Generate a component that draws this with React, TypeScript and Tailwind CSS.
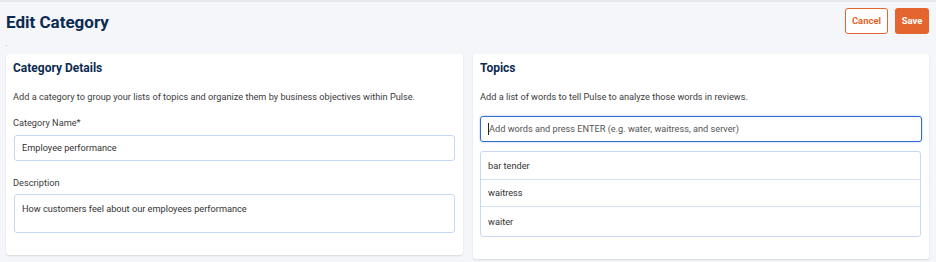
import React from "react";

export default function App() {
  const font = { fontFamily: "Roboto, 'Liberation Sans', sans-serif" };
  return (
    <div
      className="w-[936px] h-[262px] bg-[#f4f6f9] overflow-hidden relative border-t-2 border-[#e6e8ec]"
      style={font}
    >
      <div className="flex items-start justify-between pl-[6px] pr-[7px] pt-[6px] h-[52px]">
        <div className="flex flex-col">
          <h1 className="text-[17px] leading-[24px] font-bold text-[#0c2b50] mt-[2px]">Edit Category</h1>
          <div className="w-[1px] h-[1px] bg-[#a9c3ee] mt-[11px]" />
        </div>
        <div className="flex gap-[7px]">
          <button className="h-[26px] w-[43px] rounded-[3px] border border-[#e4652e] bg-white text-[#e4652e] text-[9.5px] font-bold">
            Cancel
          </button>
          <button className="h-[26px] w-[34px] rounded-[3px] bg-[#e4652e] text-white text-[9.5px] font-bold">
            Save
          </button>
        </div>
      </div>
      <div className="flex items-start gap-[10px] pl-[6px] pr-[7px]">
        <div className="w-[457px] bg-white rounded-[3px] shadow-[0_1px_2px_rgba(0,0,0,0.12)] pl-[7px] pr-[8px] pt-[6px] pb-[22px]">
          <h2 className="text-[12px] leading-[16px] font-bold text-[#0c2b50]">Category Details</h2>
          <p className="text-[9.2px] leading-[14px] text-[#3c3c3c] mt-[14px]">
            Add a category to group your lists of topics and organize them by business objectives within Pulse.
          </p>
          <div className="text-[9.2px] leading-[14px] text-[#3c3c3c] mt-[12px]">Category Name*</div>
          <div className="mt-[5px] ml-[1px] h-[26px] border border-[#c6d8f4] rounded-[3px] flex items-center px-[7px] text-[9.2px] text-[#333]">
            Employee performance
          </div>
          <div className="text-[9.2px] leading-[14px] text-[#3c3c3c] mt-[15px]">Description</div>
          <div className="mt-[4px] ml-[1px] h-[39px] border border-[#c6d8f4] rounded-[3px] px-[7px] pt-[7px] text-[9.2px] leading-[14px] text-[#333]">
            How customers feel about our employees performance
          </div>
        </div>
        <div className="w-[456px] bg-white rounded-[3px] shadow-[0_1px_2px_rgba(0,0,0,0.12)] px-[7px] pt-[6px] pb-[22px]">
          <h2 className="text-[12px] leading-[16px] font-bold text-[#0c2b50]">Topics</h2>
          <p className="text-[9.2px] leading-[14px] text-[#3c3c3c] mt-[14px]">
            Add a list of words to tell Pulse to analyze those words in reviews.
          </p>
          <div className="mt-[12px] h-[26px] border border-[#2e6ccf] rounded-[3px] shadow-[0_0_2px_rgba(46,108,207,0.5)] flex items-center pl-[7px] text-[9.2px] text-[#555]">
            <span className="w-[1px] h-[12px] bg-[#222]" />
            Add words and press ENTER (e.g. water, waitress, and server)
          </div>
          <div className="mt-[9px] mr-[1px] border border-[#c6d8f4] rounded-[3px] text-[9.2px] text-[#333]">
            <div className="h-[28px] flex items-center px-[7px] border-b border-[#d3e1f6]">bar tender</div>
            <div className="h-[27px] flex items-center px-[7px] border-b border-[#d3e1f6]">waitress</div>
            <div className="h-[29px] flex items-center px-[7px]">waiter</div>
          </div>
        </div>
      </div>
    </div>
  );
}
